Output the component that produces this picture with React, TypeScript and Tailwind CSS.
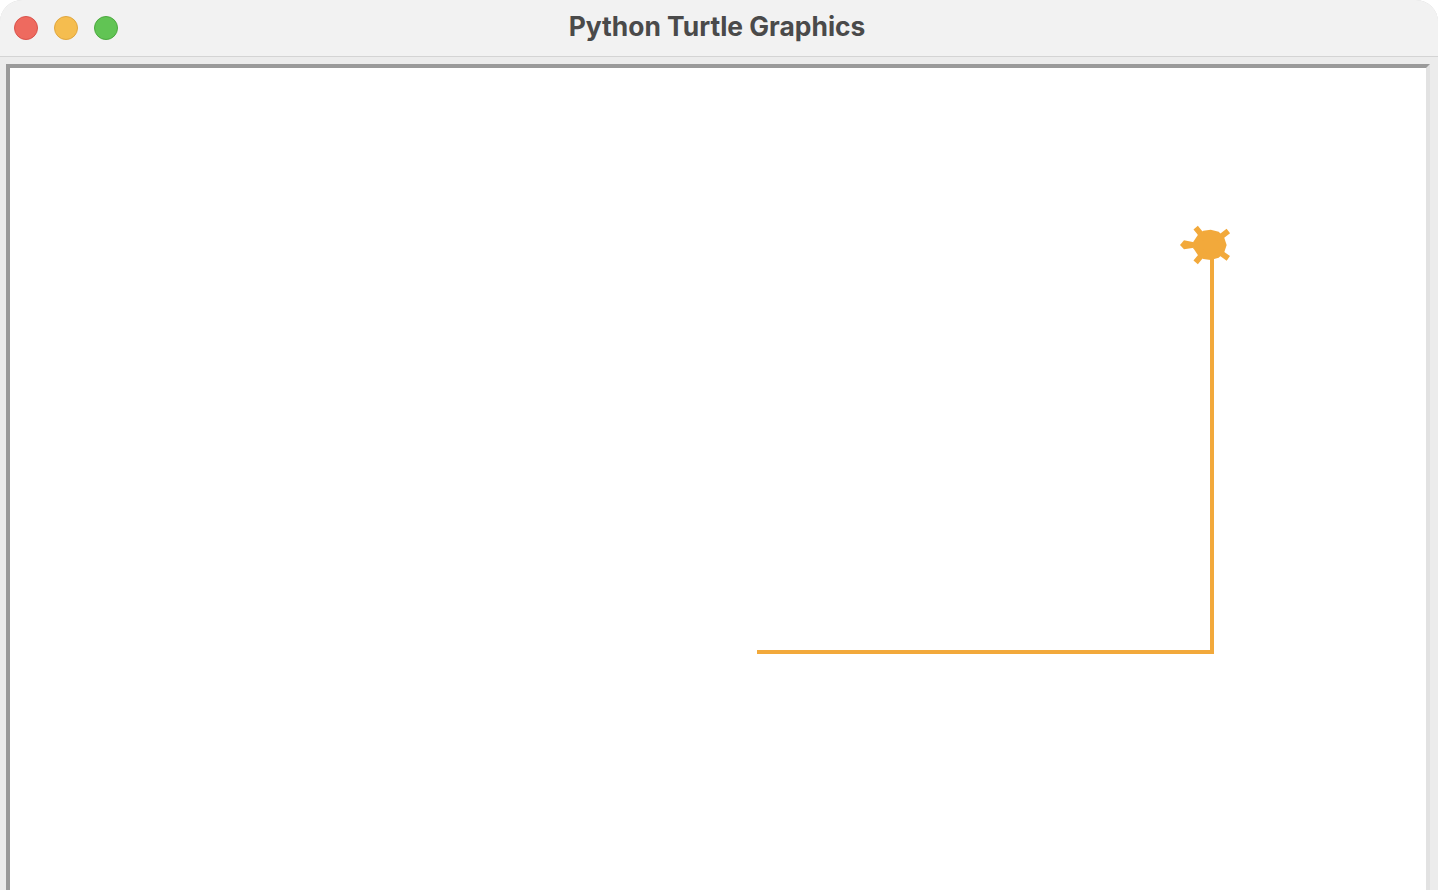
export default function App() {
  return (
    <div className="h-[890px] w-[1438px] overflow-hidden bg-white">
      <div className="flex h-full flex-col overflow-hidden rounded-t-[22px] bg-[#ececec] shadow-[inset_0_1px_0_#d9d9d9]">
        <header className="relative flex h-[57px] shrink-0 items-center gap-4 border-b border-[#d4d4d4] bg-[#f2f2f2] pl-3.5">
          <span className="h-6 w-6 rounded-full border border-[#d9534c] bg-[#ee6a5f]" />
          <span className="h-6 w-6 rounded-full border border-[#dfa63f] bg-[#f5bd4f]" />
          <span className="h-6 w-6 rounded-full border border-[#4ca83f] bg-[#61c454]" />
          <h1 className="absolute inset-x-0 top-0 pr-1 text-center font-['Inter',sans-serif] text-[26.4px] leading-[53px] font-bold text-[#4a4a4a]">
            Python Turtle Graphics
          </h1>
        </header>
        <main className="flex flex-1 pt-[7px] pr-2 pl-1.5">
          <div className="relative flex-1 border-t-4 border-r-4 border-l-4 border-t-[#9a9a9a] border-r-[#e2e2e2] border-l-[#9a9a9a] bg-white">
            <svg className="absolute top-[-68px] left-[-10px]" width="1438" height="890" viewBox="0 0 1438 890">
              <path d="M757 652H1212V245" fill="none" stroke="#f2a93b" strokeWidth="4" />
              <g transform="translate(1170 215) scale(0.3333)" fill="#f2a93b" stroke="#f2a93b">
                <polygon
                  strokeWidth="0"
                  points="85,58 100,47 122,44 146,50 162,66 170,90 162,114 146,128 122,135 100,132 85,122 70,100 70,80"
                />
                <polygon strokeWidth="0" points="30,90 42,76 72,82 72,98 42,103" />
                <path d="M77 38L105 72M175 48L140 75M175 130L140 105M77 142L105 108" fill="none" strokeWidth="17" />
              </g>
            </svg>
          </div>
        </main>
      </div>
    </div>
  );
}
